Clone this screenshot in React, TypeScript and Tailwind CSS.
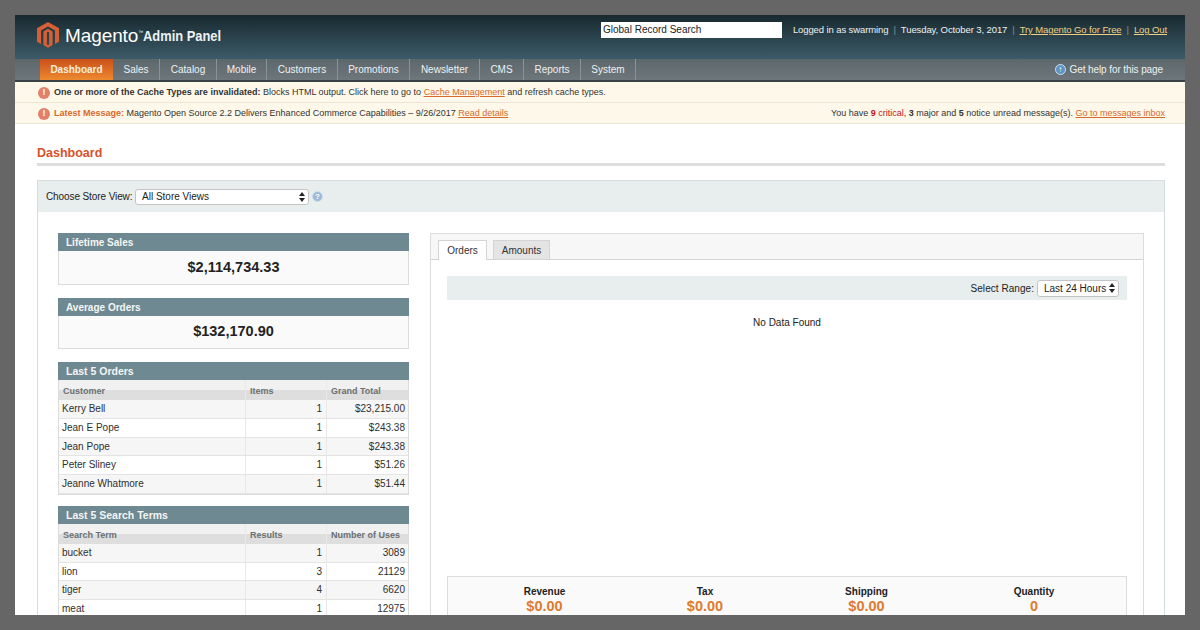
const font = "font-['Liberation_Sans',Arial,sans-serif]";

const navItems = [
  { label: "Sales", width: "w-[47px]" },
  { label: "Catalog", width: "w-[57px]" },
  { label: "Mobile", width: "w-[50px]" },
  { label: "Customers", width: "w-[71px]" },
  { label: "Promotions", width: "w-[72px]" },
  { label: "Newsletter", width: "w-[70px]" },
  { label: "CMS", width: "w-[44px]" },
  { label: "Reports", width: "w-[57px]" },
  { label: "System", width: "w-[55px]" },
];

const orders = [
  ["Kerry Bell", "1", "$23,215.00"],
  ["Jean E Pope", "1", "$243.38"],
  ["Jean Pope", "1", "$243.38"],
  ["Peter Sliney", "1", "$51.26"],
  ["Jeanne Whatmore", "1", "$51.44"],
];

const terms = [
  ["bucket", "1", "3089"],
  ["lion", "3", "21129"],
  ["tiger", "4", "6620"],
  ["meat", "1", "12975"],
];

const totals = [
  { label: "Revenue", value: "$0.00", width: "w-[193px]" },
  { label: "Tax", value: "$0.00", width: "w-[128px]" },
  { label: "Shipping", value: "$0.00", width: "w-[195px]" },
  { label: "Quantity", value: "0", width: "w-[140px]" },
];

function MagentoLogo() {
  return (
    <svg width="22" height="26" viewBox="0 0 22 26" className="shrink-0">
      <path
        d="M11 0 L22 6.3 V19.7 L18 22 V8.6 L11 4.6 L4 8.6 V22 L0 19.7 V6.3 Z"
        fill="#d65f33"
      />
      <path
        d="M11 6.8 L15.6 9.4 V23 L11 25.8 L6.4 23 V9.4 Z M9.9 10.4 V22.6 L11 23.3 L12.1 22.6 V10.4 L11 9.8 Z"
        fill="#d65f33"
      />
    </svg>
  );
}

function AlertIcon() {
  return (
    <span className="flex size-[12px] shrink-0 items-center justify-center rounded-full bg-[#e2806c] text-[9px] leading-none font-bold text-white">
      !
    </span>
  );
}

function HelpIcon({ glyph, tone }: { glyph: string; tone: string }) {
  return (
    <span
      className={`flex size-[11px] shrink-0 items-center justify-center rounded-full border border-[#cfe0ee] ${tone} text-[8px] leading-none font-bold text-white`}
    >
      {glyph}
    </span>
  );
}

function SelectArrows() {
  return (
    <svg width="6" height="10" viewBox="0 0 6 10" className="shrink-0">
      <path d="M3 0 L6 4 H0 Z M3 10 L0 6 H6 Z" fill="#222" />
    </svg>
  );
}

function SectionHead({ title, size }: { title: string; size: string }) {
  return (
    <div className={`h-[18px] bg-[#6f8992] pl-[8px] ${size} leading-[19px] font-bold text-[#f4f6f6]`}>
      {title}
    </div>
  );
}

function StatBox({ title, value }: { title: string; value: string }) {
  return (
    <div className="mb-[13px]">
      <SectionHead title={title} size="text-[10px]" />
      <div className="flex h-[33.5px] items-center justify-center border border-t-0 border-[#dcdcdc] bg-[#fafafa] pt-[1px] text-[14.5px] font-bold text-[#222]">
        {value}
      </div>
    </div>
  );
}

function DataTable({
  title,
  columns,
  rows,
}: {
  title: string;
  columns: string[];
  rows: string[][];
}) {
  return (
    <div className="mb-[11px]">
      <SectionHead title={title} size="text-[10.5px]" />
      <div className="border border-t-0 border-[#dcdcdc]">
        <div className="flex h-[20px] bg-[linear-gradient(#f1f1f1_50%,#dedede_50%)] text-[9px] leading-[22px] font-bold text-[#6a6f71]">
          <div className="w-[187px] border-r border-[#e8e8e8] pl-[4px]">{columns[0]}</div>
          <div className="w-[81px] border-r border-[#e8e8e8] pl-[4px]">{columns[1]}</div>
          <div className="flex-1 pl-[4px]">{columns[2]}</div>
        </div>
        {rows.map((row, i) => (
          <div
            key={row[0] + i}
            className={`flex h-[18.75px] border-b border-[#e4e4e4] text-[10px] leading-[18px] text-[#2f2f2f] ${
              i % 2 === 0 ? "bg-[#f6f6f6]" : "bg-white"
            }`}
          >
            <div className="w-[187px] border-r border-[#e8e8e8] pl-[3px]">{row[0]}</div>
            <div className="w-[81px] border-r border-[#e8e8e8] pr-[4px] text-right">{row[1]}</div>
            <div className="flex-1 pr-[3px] text-right">{row[2]}</div>
          </div>
        ))}
      </div>
    </div>
  );
}

export default function App() {
  return (
    <div className={`h-[630px] w-[1200px] overflow-hidden bg-[#666666] p-[15px] ${font}`}>
      <div className="h-[600px] overflow-hidden bg-white">
        <header className="flex h-[44px] bg-[linear-gradient(#18292f,#3c5b68)] pt-[7px] pr-[18px] pl-[22px]">
          <div className="flex h-[26px] w-[564px] shrink-0 items-center">
            <MagentoLogo />
            <span className="ml-[6px] text-[19px] leading-none tracking-[-0.1px] text-white">
              Magento
            </span>
            <span className="mb-[6px] text-[5px] leading-none text-white">™</span>
            <span className="origin-left text-[15px] leading-none font-bold whitespace-nowrap text-[#eef2f3] [transform:scaleX(0.86)]">
              Admin Panel
            </span>
          </div>
          <div className="h-[16px] w-[181px] shrink-0 bg-white pl-[2px] text-[10px] leading-[16px] text-[#222]">
            Global Record Search
          </div>
          <div className="ml-auto flex h-[16px] items-center gap-[5px] text-[9.5px] tracking-[-0.1px] whitespace-nowrap text-[#eef1f2]">
            <span>Logged in as swarming</span>
            <span className="text-[#7f939b]">|</span>
            <span>Tuesday, October 3, 2017</span>
            <span className="text-[#7f939b]">|</span>
            <span className="text-[#f0cf83] underline">Try Magento Go for Free</span>
            <span className="text-[#7f939b]">|</span>
            <span className="text-[#f0cf83] underline">Log Out</span>
          </div>
        </header>

        <nav className="flex h-[23px] border-b-2 border-[#3b4245] bg-[linear-gradient(#5c676c,#6e777b)] pl-[25px] text-[10px] text-[#eef1f2]">
          <div className="flex w-[73px] items-center justify-center bg-[linear-gradient(#c9501a,#ee8a2f)] font-bold text-[#fbeedd]">
            Dashboard
          </div>
          {navItems.map((item) => (
            <div
              key={item.label}
              className={`flex ${item.width} items-center justify-center border-r border-[#8a9397]`}
            >
              {item.label}
            </div>
          ))}
          <div className="mr-[22px] ml-auto flex items-center gap-[4px] tracking-[-0.1px]">
            <HelpIcon glyph="↑" tone="bg-[#5f93c4]" />
            <span>Get help for this page</span>
          </div>
        </nav>

        <div className="flex h-[21px] items-center gap-[4px] border-b border-[#eee6d4] bg-[#fef8ea] pt-[1px] pl-[23px] text-[9px] text-[#333]">
          <AlertIcon />
          <span>
            <b>One or more of the Cache Types are invalidated:</b> Blocks HTML output. Click here to go to{" "}
            <span className="text-[#d9692a] underline">Cache Management</span> and refresh cache types.
          </span>
        </div>
        <div className="flex h-[21px] items-center border-b border-[#eee6d4] bg-[#fef8ea] pt-[1px] pr-[20px] pl-[23px] text-[9px] text-[#333]">
          <AlertIcon />
          <span className="ml-[4px]">
            <b className="text-[#d9692a]">Latest Message:</b> Magento Open Source 2.2 Delivers Enhanced Commerce Capabilities – 9/26/2017{" "}
            <span className="text-[#d9692a] underline">Read details</span>
          </span>
          <span className="ml-auto">
            You have <b className="text-[#c1121f]">9</b>{" "}
            <span className="text-[#c1121f]">critical</span>, <b>3</b> major and <b>5</b> notice unread message(s).{" "}
            <span className="text-[#d9692a] underline">Go to messages inbox</span>
          </span>
        </div>

        <main className="pt-[20px] pr-[20px] pl-[22px]">
          <h1 className="h-[19px] text-[12.5px] leading-[18px] font-bold text-[#d6522a]">Dashboard</h1>
          <div className="h-[3px] bg-[#dedede]" />

          <div className="mt-[14px] h-[440px] border border-b-0 border-[#d6dedd]">
            <div className="flex h-[31px] items-center bg-[#e7eeed] pl-[8px] text-[10px] text-[#222]">
              <span className="w-[86px] whitespace-nowrap tracking-[-0.1px]">Choose Store View:</span>
              <div className="ml-[3px] flex h-[16px] w-[174px] items-center justify-between rounded-[3px] border border-[#c4c4c4] bg-white pr-[3px] pl-[6px]">
                <span>All Store Views</span>
                <SelectArrows />
              </div>
              <div className="ml-[3px]">
                <HelpIcon glyph="?" tone="bg-[#9db9d6]" />
              </div>
            </div>

            <div className="flex pt-[21px] pl-[20px]">
              <div className="w-[351px]">
                <StatBox title="Lifetime Sales" value="$2,114,734.33" />
                <StatBox title="Average Orders" value="$132,170.90" />
                <DataTable title="Last 5 Orders" columns={["Customer", "Items", "Grand Total"]} rows={orders} />
                <DataTable title="Last 5 Search Terms" columns={["Search Term", "Results", "Number of Uses"]} rows={terms} />
              </div>

              <div className="ml-[21px] h-[420px] w-[714px] border border-[#dcdcdc]">
                <div className="flex h-[26px] items-end gap-[6px] border-b border-[#d4d4d4] bg-[#f7f7f7] pl-[7px] text-[10px] text-[#333]">
                  <div className="-mb-px flex h-[20px] w-[49px] items-center justify-center border border-b-0 border-[#d4d4d4] bg-white">
                    Orders
                  </div>
                  <div className="flex h-[19px] w-[57px] items-center justify-center border border-b-0 border-[#d4d4d4] bg-[#e4e4e4]">
                    Amounts
                  </div>
                </div>
                <div className="px-[16px] pt-[16px]">
                  <div className="flex h-[24px] items-center justify-end bg-[#e7eeed] pr-[8px] text-[10px] whitespace-nowrap text-[#222]">
                    <span className="tracking-[0.05px]">Select Range:</span>
                    <div className="ml-[3px] flex h-[17px] w-[82px] items-center justify-between rounded-[3px] border border-[#c4c4c4] bg-white pr-[3px] pl-[6px]">
                      <span>Last 24 Hours</span>
                      <SelectArrows />
                    </div>
                  </div>
                  <div className="mt-[16px] h-[260px] text-center text-[10px] leading-[14px] text-[#222]">
                    No Data Found
                  </div>
                  <div className="flex h-[60px] border border-[#dcdcdc] bg-[#fafafa] pt-[8px]">
                    {totals.map((t) => (
                      <div key={t.label} className={`${t.width} text-center`}>
                        <div className="text-[10px] leading-[14px] font-bold text-[#222]">{t.label}</div>
                        <div className="text-[14.5px] leading-[15px] font-bold text-[#de7b2e]">{t.value}</div>
                      </div>
                    ))}
                  </div>
                </div>
              </div>
            </div>
          </div>
        </main>
      </div>
    </div>
  );
}
